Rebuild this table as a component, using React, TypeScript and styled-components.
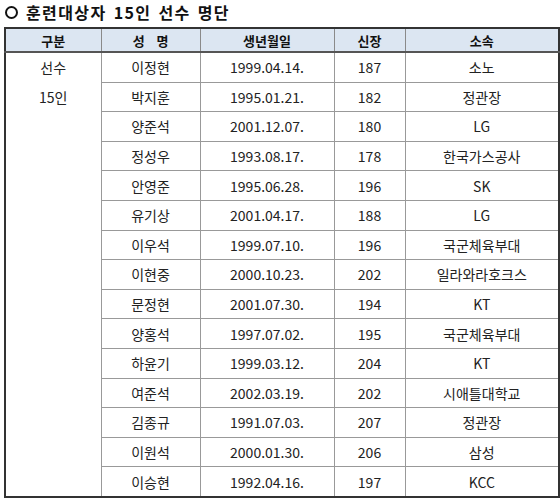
import React from "react";
import styled, { createGlobalStyle } from "styled-components";

const players = [
  ["이정현", "1999.04.14.", "187", "소노"],
  ["박지훈", "1995.01.21.", "182", "정관장"],
  ["양준석", "2001.12.07.", "180", "LG"],
  ["정성우", "1993.08.17.", "178", "한국가스공사"],
  ["안영준", "1995.06.28.", "196", "SK"],
  ["유기상", "2001.04.17.", "188", "LG"],
  ["이우석", "1999.07.10.", "196", "국군체육부대"],
  ["이현중", "2000.10.23.", "202", "일라와라호크스"],
  ["문정현", "2001.07.30.", "194", "KT"],
  ["양홍석", "1997.07.02.", "195", "국군체육부대"],
  ["하윤기", "1999.03.12.", "204", "KT"],
  ["여준석", "2002.03.19.", "202", "시애틀대학교"],
  ["김종규", "1991.07.03.", "207", "정관장"],
  ["이원석", "2000.01.30.", "206", "삼성"],
  ["이승현", "1992.04.16.", "197", "KCC"],
];

const GlobalStyle = createGlobalStyle`
  body {
    margin: 0;
    background: #fff;
    font-family: "Noto Sans CJK KR", "Noto Sans", sans-serif;
    color: #111;
  }
`;

const Page = styled.div`
  width: 560px;
  padding: 2px 0 0 4px;
  box-sizing: border-box;
`;

const Title = styled.h1`
  margin: 0 0 5px 1px;
  font-size: 16px;
  font-weight: 700;
  line-height: 20px;
  letter-spacing: 1.4px;
  word-spacing: 2px;
  display: flex;
  align-items: center;
  gap: 8px;
`;

const Bullet = styled.span`
  width: 9px;
  height: 9px;
  border: 2px solid #111;
  border-radius: 50%;
`;

const Table = styled.table`
  border-collapse: collapse;
  table-layout: fixed;
  width: 554px;
  border: 2px solid #333;
  font-size: 14px;
`;

const HeadCell = styled.th`
  background: #dce6f2;
  font-weight: 700;
  font-size: 13px;
  height: 22px;
  padding: 0;
  border: 1px solid #8a8a8a;
  border-bottom: 2px solid #555;
  text-align: center;
  color: #111;
`;

const Cell = styled.td`
  height: 28.6px;
  padding: 0;
  border: 1px solid #999;
  text-align: center;
  color: #222;
`;

const GroupCell = styled(Cell)`
  vertical-align: top;
  line-height: 29.6px;
`;

export default function App() {
  return (
    <Page>
      <GlobalStyle />
      <Title>
        <Bullet />
        훈련대상자 15인 선수 명단
      </Title>
      <Table>
        <colgroup>
          <col style={{ width: 96 }} />
          <col style={{ width: 99 }} />
          <col style={{ width: 134 }} />
          <col style={{ width: 71 }} />
          <col style={{ width: 154 }} />
        </colgroup>
        <thead>
          <tr>
            <HeadCell>구분</HeadCell>
            <HeadCell>성&nbsp;&nbsp;&nbsp;&nbsp;명</HeadCell>
            <HeadCell>생년월일</HeadCell>
            <HeadCell>신장</HeadCell>
            <HeadCell>소속</HeadCell>
          </tr>
        </thead>
        <tbody>
          {players.map((p, i) => (
            <tr key={p[0]}>
              {i === 0 && (
                <GroupCell rowSpan={players.length}>
                  선수
                  <br />
                  15인
                </GroupCell>
              )}
              <Cell>{p[0]}</Cell>
              <Cell>{p[1]}</Cell>
              <Cell>{p[2]}</Cell>
              <Cell>{p[3]}</Cell>
            </tr>
          ))}
        </tbody>
      </Table>
    </Page>
  );
}
